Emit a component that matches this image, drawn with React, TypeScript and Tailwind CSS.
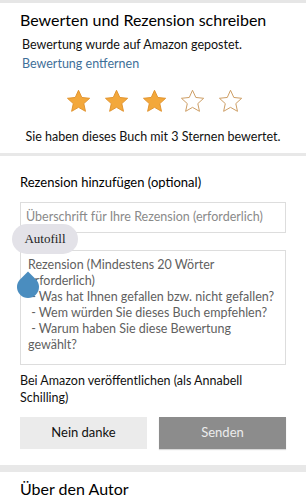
import { ReactNode } from "react";

function Star({ filled }: { filled: boolean }) {
  return (
    <svg width="25" height="24" viewBox="0 0 24 23">
      <path
        d="M12 1.2l3.2 6.9 7.5.8-5.6 5.1 1.6 7.4L12 17.6l-6.6 3.8 1.6-7.4-5.6-5.1 7.5-.8z"
        fill={filled ? "#f3a83b" : "#ffffff"}
        stroke={filled ? "#e0912a" : "#c9975a"}
        strokeWidth="0.9"
        strokeLinejoin="round"
      />
    </svg>
  );
}

function Button({ children, primary }: { children: ReactNode; primary?: boolean }) {
  return (
    <button
      className={
        primary
          ? "flex h-8 flex-1 items-center justify-center bg-[#8c8c8c] text-[13px] text-[#ececec] shadow-[0_1px_1px_rgba(0,0,0,0.15)]"
          : "flex h-8 flex-1 items-center justify-center bg-[#ebebeb] text-[13px] text-[#111111]"
      }
    >
      {children}
    </button>
  );
}

export default function App() {
  return (
    <div
      className="flex h-[500px] w-[306px] flex-col overflow-hidden bg-white text-[#111111]"
      style={{ fontFamily: 'Lato, "Noto Sans", sans-serif' }}
    >
      <div className="h-[3px] shrink-0 bg-[#e6e6e6]" />

      {/* Rating */}
      <div className="px-5 pt-[5px]">
        <h1 className="text-[16px] leading-6 text-black">
          Bewerten und Rezension schreiben
        </h1>
        <p className="mt-[4px] px-0.5 text-[12.5px] leading-[18px]">Bewertung wurde auf Amazon gepostet.</p>
        <p className="mt-[1px] px-0.5 text-[12.5px] leading-[18px] text-[#3f6f99]">Bewertung entfernen</p>
        <div className="mt-[16px] flex justify-center gap-[13px] pl-[2px]">
          <Star filled />
          <Star filled />
          <Star filled />
          <Star filled={false} />
          <Star filled={false} />
        </div>
        <p className="mt-[15px] text-center text-[12.5px] leading-[18px]">
          Sie haben dieses Buch mit 3 Sternen bewertet.
        </p>
      </div>

      <div className="mt-[7px] h-[3px] shrink-0 bg-[#e8e8e8]" />

      {/* Review */}
      <div className="relative px-5 pt-[16px]">
        <h2 className="text-[13px] leading-5 text-black">Rezension hinzufügen (optional)</h2>

        <div className="mt-[10px] flex h-[31px] items-center border border-[#dddddd] px-[5px] text-[12.5px] whitespace-nowrap text-[#8a8a8a]">
          Überschrift für Ihre Rezension (erforderlich)
        </div>

        <div className="mt-[17px] h-[115px] border border-[#dddddd] px-[7px] pt-[6px] text-[12.5px] leading-[16px] whitespace-nowrap text-[#5f5f5f]">
          Rezension (Mindestens 20 Wörter
          <br />
          erforderlich)
          <br />
          &nbsp;- Was hat Ihnen gefallen bzw. nicht gefallen?
          <br />
          &nbsp;- Wem würden Sie dieses Buch empfehlen?
          <br />
          &nbsp;- Warum haben Sie diese Bewertung
          <br />
          gewählt?
        </div>

        {/* Autofill pill */}
        <div
          className="absolute top-[68px] left-[12px] flex h-[30px] w-[66px] items-center justify-center rounded-full bg-[#e3e2e8] text-[13px] text-[#222222]"
          style={{ fontFamily: '"Liberation Serif", serif' }}
        >
          Autofill
        </div>

        {/* Cursor handle */}
        <div className="absolute top-[120px] left-[17px] h-[22px] w-[22px] rotate-45 rounded-full rounded-tl-none bg-[#4a8dbf]" />

        <p className="mt-[7px] text-[12.5px] leading-[17px]">
          Bei Amazon veröffentlichen (als Annabell
          <br />
          Schilling)
        </p>

        <div className="mt-[11px] flex gap-[12px]">
          <Button>Nein danke</Button>
          <Button primary>Senden</Button>
        </div>
      </div>

      <div className="mt-[16px] h-[7px] shrink-0 bg-[#e8e8e8]" />

      <div className="px-5 pt-[5px]">
        <h2 className="text-[16px] leading-6 text-black">Über den Autor</h2>
      </div>
    </div>
  );
}
